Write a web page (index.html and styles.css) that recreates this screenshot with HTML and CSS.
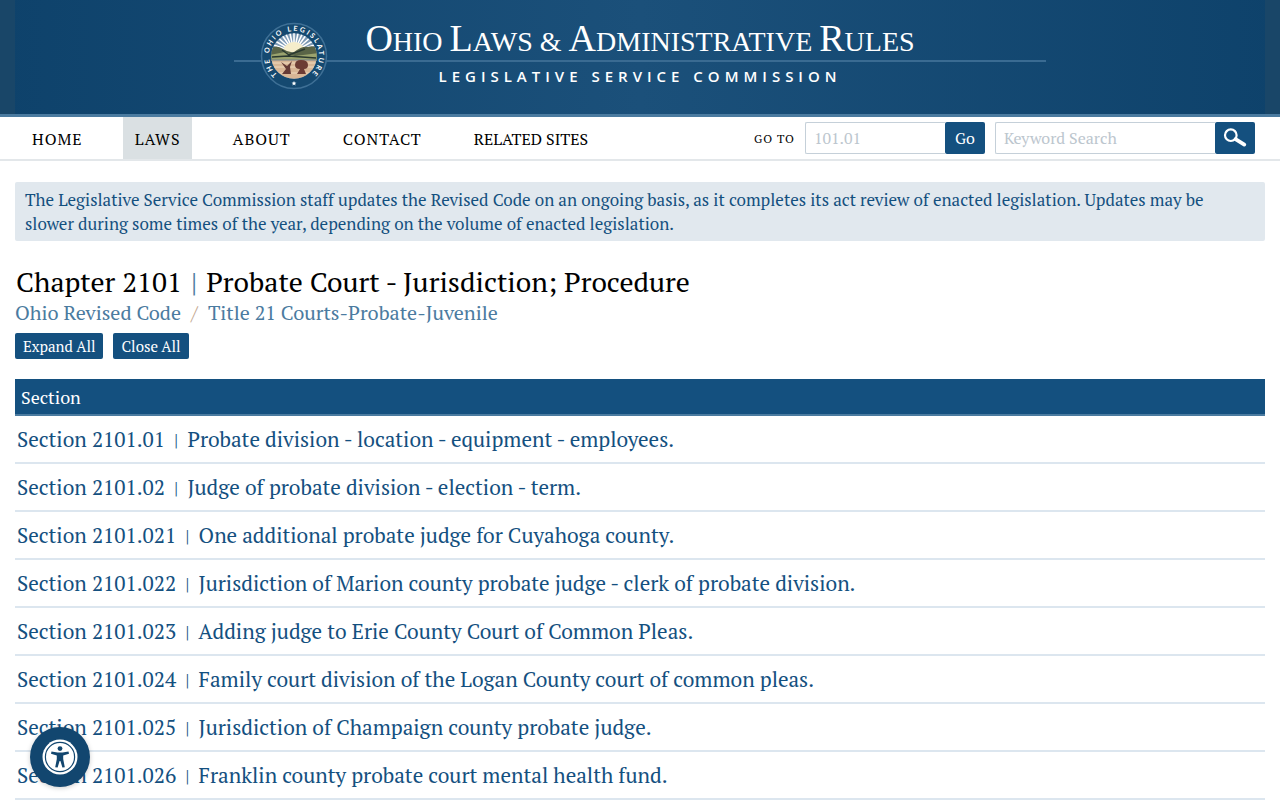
FILE: index.html
```html
<!DOCTYPE html>
<html lang="en">
<head>
  <meta charset="UTF-8">
  <meta name="viewport" content="width=device-width, initial-scale=1">
  <title>Chapter 2101 - Ohio Revised Code | Ohio Laws</title>
  <link rel="stylesheet" href="styles.css">
</head>

<body>

  <header class="site-header">
    <a class="brand" href="#">
      <span class="brand-title"><span class="cap">O</span>hio <span class="cap">L</span>aws &amp; <span class="cap">A</span>dministrative <span class="cap">R</span>ules</span>
      <span class="brand-rule"></span>
      <span class="brand-subtitle">Legislative Service Commission</span>
      <svg class="seal" viewBox="0 0 68 68" aria-hidden="true">
        <defs>
          <path id="sealRing" d="M 33.9 59 A 25 25 0 1 1 34.1 59"/>
          <clipPath id="sealClip"><circle cx="34" cy="34" r="22.8"/></clipPath>
        </defs>
        <circle cx="34" cy="34" r="32.5" fill="#154970" stroke="#3f7096" stroke-width="1.5"/>
        <g clip-path="url(#sealClip)">
          <rect x="10" y="10" width="48" height="48" fill="#7d9ab5"/>
          <g stroke="#fff" stroke-width="1.6">
            <path d="M34 30L8 26M34 30L8 21M34 30L10 16M34 30L14 12M34 30L19 9M34 30L24 8M34 30L29 7M34 30L34 7M34 30L39 7M34 30L44 8M34 30L49 9M34 30L54 12M34 30L58 16M34 30L60 21M34 30L60 26"/>
          </g>
          <path d="M23 30A11 10 0 0 1 45 30Z" fill="#f5edcb"/>
          <path d="M10 27Q16 22 23 27Q29 31 34 30Q42 24 48 25Q54 23 58 27V39H10Z" fill="#596447"/>
          <path d="M10 33L25 30L35 34L58 31V39H10Z" fill="#9aa36e"/>
          <path d="M22 28L29 33L45 27M12 35L28 34L56 36" fill="none" stroke="#29382f" stroke-width="1.5"/>
          <path d="M10 38H58V58H10Z" fill="#d8b696"/>
          <path d="M12 41H56M14 45H54M18 51H52" stroke="#efd9bd" stroke-width="1"/>
          <path d="M10 38H58" stroke="#73808a" stroke-width="1.2"/>
          <path d="M21 40L27 44L32 39L30 45L31 52H22L26 47Z" fill="#653a36"/>
          <path d="M35 43Q35 38 41 38Q48 38 48 43Q48 47 44 47L46 52H37L40 47Q35 47 35 43Z" fill="#6d3c34"/>
        </g>
        <text class="seal-text"><textPath href="#sealRing" startOffset="50%" text-anchor="middle">THE OHIO LEGISLATURE</textPath></text>
        <path d="M34 59l.7 1.6 1.7.1-1.3 1.1.4 1.7-1.5-.9-1.5.9.4-1.7-1.3-1.1 1.7-.1z" fill="#fff"/>
      </svg>
    </a>
  </header>

  <nav class="navbar">
    <ul class="menu">
      <li><a href="#">Home</a></li>
      <li><a class="active" href="#">Laws</a></li>
      <li><a href="#">About</a></li>
      <li><a href="#">Contact</a></li>
      <li><a class="compact" href="#">Related Sites</a></li>
    </ul>
    <div class="searches">
      <form class="search-form">
        <label for="goTo">Go To</label>
        <input class="goto-input" type="text" id="goTo" placeholder="101.01">
        <button type="button">Go</button>
      </form>
      <form class="search-form">
        <input class="keyword-input" type="text" id="keyword" placeholder="Keyword Search" aria-label="Keyword Search">
        <button type="button" aria-label="Search">
          <svg width="24" height="20" viewBox="0 0 24 20" aria-hidden="true">
            <circle cx="7.8" cy="7.2" r="5.8" fill="none" stroke="#fff" stroke-width="2.2"/>
            <path d="M12.5 11.2L21.3 16.6" stroke="#fff" stroke-width="3.8" stroke-linecap="round"/>
          </svg>
        </button>
      </form>
    </div>
  </nav>

  <main class="content">
    <p class="notice">The Legislative Service Commission staff updates the Revised Code on an ongoing basis, as it completes its act review of enacted legislation. Updates may be slower during some times of the year, depending on the volume of enacted legislation.</p>

    <h1>Chapter 2101 <span class="bar">|</span> Probate Court - Jurisdiction; Procedure</h1>
    <div class="breadcrumbs">
      <a href="#">Ohio Revised Code</a>
      <span class="slash">/</span>
      <a href="#">Title 21 Courts-Probate-Juvenile</a>
    </div>
    <div class="list-controls">
      <button type="button">Expand All</button>
      <button type="button">Close All</button>
    </div>

    <table class="section-list">
      <thead>
        <tr><th>Section</th></tr>
      </thead>
      <tbody>
        <tr><td><a href="#">Section 2101.01 <span class="bar">|</span> Probate division - location - equipment - employees.</a></td></tr>
        <tr><td><a href="#">Section 2101.02 <span class="bar">|</span> Judge of probate division - election - term.</a></td></tr>
        <tr><td><a href="#">Section 2101.021 <span class="bar">|</span> One additional probate judge for Cuyahoga county.</a></td></tr>
        <tr><td><a href="#">Section 2101.022 <span class="bar">|</span> Jurisdiction of Marion county probate judge - clerk of probate division.</a></td></tr>
        <tr><td><a href="#">Section 2101.023 <span class="bar">|</span> Adding judge to Erie County Court of Common Pleas.</a></td></tr>
        <tr><td><a href="#">Section 2101.024 <span class="bar">|</span> Family court division of the Logan County court of common pleas.</a></td></tr>
        <tr><td><a href="#">Section 2101.025 <span class="bar">|</span> Jurisdiction of Champaign county probate judge.</a></td></tr>
        <tr><td><a href="#">Section 2101.026 <span class="bar">|</span> Franklin county probate court mental health fund.</a></td></tr>
      </tbody>
    </table>
  </main>

  <button class="accessibility" type="button" aria-label="Accessibility">
    <svg width="36" height="36" viewBox="0 0 36 36" aria-hidden="true">
      <circle cx="18" cy="18" r="17.5" fill="#fff"/>
      <circle cx="18" cy="18" r="14.6" fill="none" stroke="#12466f" stroke-width="1.2"/>
      <circle cx="18" cy="9.6" r="2.4" fill="#12466f"/>
      <path d="M9.5 12.6L15.5 13.6H20.5L26.5 12.6L27 14.8L21.2 16.4V20L22.8 28.2L20.4 28.6L18.4 22H17.6L15.6 28.6L13.2 28.2L14.8 20V16.4L9 14.8Z" fill="#12466f"/>
    </svg>
  </button>

</body>
</html>
```

FILE: styles.css
```css
:root {
  --primary-color: #14507f;
  --header-color: #12466f;
  --accent-color: #4b7ba0;
  --notice-bg: #e1e8ee;
  --line-color: #dce6ef;
  --input-border: #c5d0d9;
}

* { margin: 0; padding: 0; box-sizing: border-box; }

body {
  font-family: 'PT Serif', 'Liberation Serif', serif;
  background-color: #fff;
  color: #000;
}

a { text-decoration: none; }

button {
  font-family: inherit;
  background-color: var(--primary-color);
  color: white;
  border: none;
  border-radius: 2px;
  cursor: pointer;
}

.site-header {
  background: linear-gradient(to right, #0e426b, #1b507a 50%, #0e426b);
  border-bottom: 3px solid var(--accent-color);
  box-shadow: inset 15px 0 #194668, inset -15px 0 #194668;
  padding: 16px 20px 29px;
}

.brand {
  display: flex;
  flex-direction: column;
  align-items: center;
  position: relative;
  max-width: 812px;
  margin: 0 auto;
  color: white;
}

.brand-title {
  font-family: 'Liberation Serif', serif;
  font-size: 28px;
  line-height: 44px;
  height: 44px;
  text-transform: uppercase;
}

.cap { font-size: 38px; }

.brand-rule {
  width: 100%;
  height: 2px;
  background-color: #3a6b92;
}

.brand-subtitle {
  font-family: 'Open Sans', sans-serif;
  font-size: 15px;
  font-weight: 600;
  line-height: 23px;
  padding-top: 3px;
  height: 23px;
  letter-spacing: 5px;
  text-transform: uppercase;
}

/* seal sits on top of the rule */
.seal {
  position: absolute;
  top: 6px;
  left: 26px;
  width: 68px;
  height: 68px;
}

.seal-text {
  font-family: Lato, sans-serif;
  font-size: 7px;
  font-weight: bold;
  letter-spacing: 2px;
  fill: white;
}

.navbar {
  display: flex;
  justify-content: space-between;
  align-items: center;
  border-bottom: 2px solid #e3e7ea;
  padding: 0 25px 0 20px;
}

.menu {
  display: flex;
  gap: 28px;
  list-style: none;
}

.menu a {
  display: block;
  padding: 2px 12px 0;
  font-size: 16px;
  line-height: 40px;
  letter-spacing: 1px;
  text-transform: uppercase;
  color: #000;
}

.menu a.active { background-color: #dae0e3; }

.menu a.compact { letter-spacing: normal; }

.searches {
  display: flex;
  gap: 10px;
}

.search-form {
  display: flex;
  align-items: center;
}

.search-form label {
  font-size: 12px;
  letter-spacing: 1px;
  text-transform: uppercase;
  margin-right: 10px;
}

.search-form input {
  height: 32px;
  padding: 0 8px;
  border: 1px solid var(--input-border);
  border-right: none;
  border-radius: 2px 0 0 2px;
  font-family: inherit;
  font-size: 16px;
}

.search-form input::placeholder { color: #bcc6ce; }

.search-form button {
  display: flex;
  align-items: center;
  justify-content: center;
  width: 40px;
  height: 32px;
  font-size: 16px;
}

.goto-input { width: 140px; }

.keyword-input { width: 220px; }

.content { padding: 21px 15px 0; }

.notice {
  background-color: var(--notice-bg);
  color: var(--primary-color);
  padding: 6px 10px 5px;
  font-size: 17px;
  line-height: 24px;
  border-radius: 2px;
}

h1 {
  font-size: 28px;
  line-height: 36px;
  font-weight: normal;
  margin: 23px 0 1px;
  padding-left: 1px;
}

h1 .bar {
  color: var(--accent-color);
  padding: 0 2px;
}

.breadcrumbs {
  display: flex;
  gap: 10px;
  font-size: 20px;
  line-height: 24px;
}

.breadcrumbs a { color: var(--accent-color); }

.slash { color: #c3a790; }

.list-controls {
  display: flex;
  gap: 10px;
  margin: 8px 0 20px;
}

.list-controls button {
  padding: 0 8px;
  font-size: 15px;
  line-height: 26px;
}

.section-list {
  width: 100%;
  border-collapse: collapse;
  text-align: left;
}

.section-list th {
  background-color: var(--primary-color);
  border-bottom: 2px solid var(--accent-color);
  color: white;
  font-size: 18px;
  font-weight: normal;
  line-height: 34px;
  padding: 1px 6px 0;
}

.section-list td {
  border-bottom: 2px solid var(--line-color);
  font-size: 21px;
  line-height: 46px;
  padding: 0 2px;
}

.section-list a {
  display: block;
  color: var(--primary-color);
}

.section-list .bar {
  font-size: 18px;
  line-height: 18px;
  vertical-align: 1px;
  padding: 0 4px;
}

.accessibility {
  position: fixed;
  left: 30px;
  bottom: 13px;
  display: flex;
  align-items: center;
  justify-content: center;
  width: 60px;
  height: 60px;
  border-radius: 50%;
  background-color: var(--header-color);
  box-shadow: 0 1px 5px rgba(0, 0, 0, 0.2);
}
```
